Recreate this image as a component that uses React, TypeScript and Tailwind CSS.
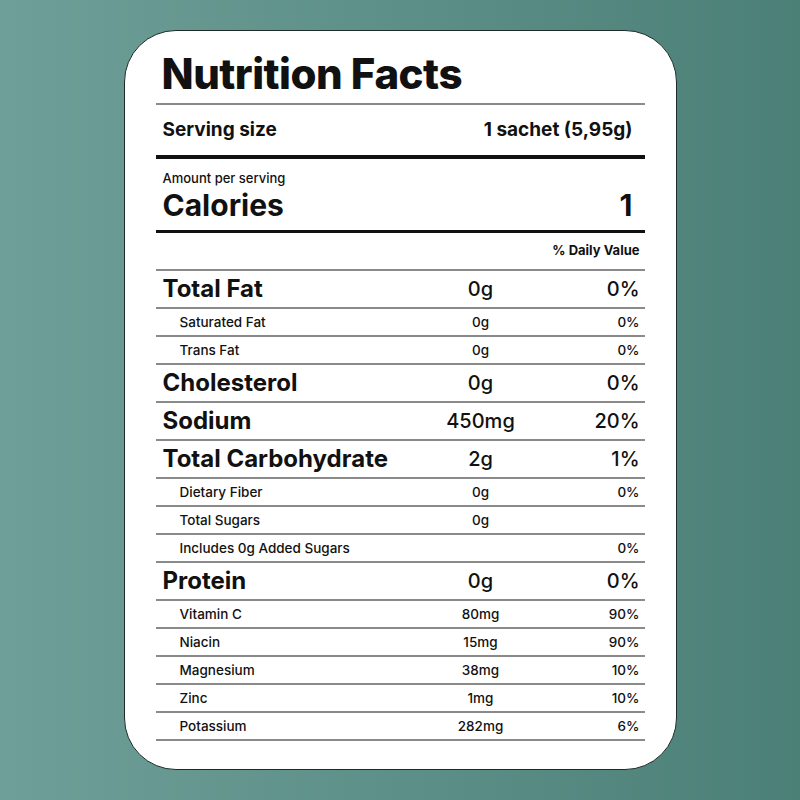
import React from "react";

type Row = {
  name: string;
  amount: string;
  dv: string;
  main?: boolean;
};

const rows: Row[] = [
  { name: "Total Fat", amount: "0g", dv: "0%", main: true },
  { name: "Saturated Fat", amount: "0g", dv: "0%" },
  { name: "Trans Fat", amount: "0g", dv: "0%" },
  { name: "Cholesterol", amount: "0g", dv: "0%", main: true },
  { name: "Sodium", amount: "450mg", dv: "20%", main: true },
  { name: "Total Carbohydrate", amount: "2g", dv: "1%", main: true },
  { name: "Dietary Fiber", amount: "0g", dv: "0%" },
  { name: "Total Sugars", amount: "0g", dv: "" },
  { name: "Includes 0g Added Sugars", amount: "", dv: "0%" },
  { name: "Protein", amount: "0g", dv: "0%", main: true },
  { name: "Vitamin C", amount: "80mg", dv: "90%" },
  { name: "Niacin", amount: "15mg", dv: "90%" },
  { name: "Magnesium", amount: "38mg", dv: "10%" },
  { name: "Zinc", amount: "1mg", dv: "10%" },
  { name: "Potassium", amount: "282mg", dv: "6%" },
];

const NutrientRow = ({ row }: { row: Row }) => {
  if (row.main) {
    return (
      <div className="flex items-center h-[38px] border-b-2 border-[#8a8a8a] pl-[7px] pr-[5px] whitespace-nowrap">
        <p className="w-[258px] text-[24px] font-bold">{row.name}</p>
        <p className="w-[120px] text-center text-[20px] font-medium">{row.amount}</p>
        <p className="flex-1 text-right text-[20px] font-medium">{row.dv}</p>
      </div>
    );
  }
  return (
    <div className="flex items-center h-[28px] border-b-2 border-[#8a8a8a] pl-[24px] pr-[5px] whitespace-nowrap text-[13.5px] font-medium">
      <p className="w-[241px]">{row.name}</p>
      <p className="w-[120px] text-center">{row.amount}</p>
      <p className="flex-1 text-right">{row.dv}</p>
    </div>
  );
};

const App = () => {
  return (
    <div className="w-[800px] h-[800px] flex items-center justify-center bg-linear-to-r from-[#6e9f98] to-[#4b8077] font-['Inter',sans-serif] text-[#111]">
      <div className="w-[553px] h-[740px] bg-white rounded-[52px] border-[1.5px] border-[#1c2b29] px-[31px] pt-[20px]">
        <h1 className="h-[54px] leading-[46px] pl-[6px] text-[42px] font-extrabold tracking-[-0.5px] border-b-2 border-[#8a8a8a]">
          Nutrition Facts
        </h1>
        <div className="flex items-center justify-between h-[54px] pl-[7px] pr-[12px] border-b-4 border-[#111] text-[19px] font-bold">
          <p>Serving size</p>
          <p>1 sachet (5,95g)</p>
        </div>
        <div className="h-[74px] pl-[7px] pr-[12px] pt-[12px] border-b-[3px] border-[#111]">
          <p className="text-[13px] font-medium leading-[14px]">Amount per serving</p>
          <div className="flex items-center justify-between">
            <p className="text-[30px] font-bold leading-[40px]">Calories</p>
            <p className="text-[30px] font-bold leading-[40px]">1</p>
          </div>
        </div>
        <div className="flex items-center justify-end h-[38px] pr-[5px] border-b-2 border-[#8a8a8a] text-[13px] font-bold">
          % Daily Value
        </div>
        {rows.map((row) => (
          <NutrientRow key={row.name} row={row} />
        ))}
      </div>
    </div>
  );
};

export default App;
